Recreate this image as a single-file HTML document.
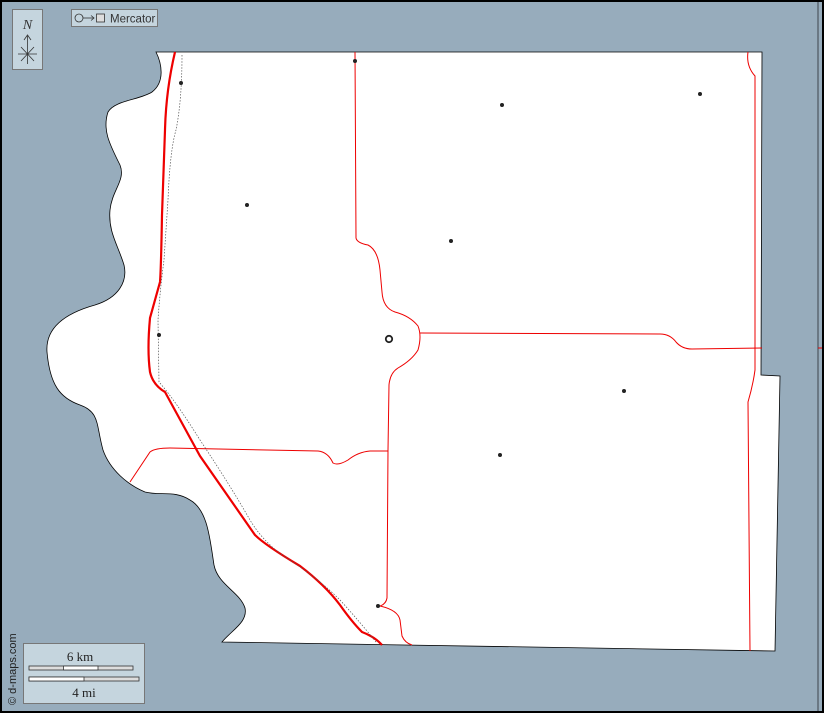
<!DOCTYPE html>
<html><head><style>body{margin:0}svg{display:block}</style></head><body>
<svg width="824" height="713" xmlns="http://www.w3.org/2000/svg">
<rect x="0" y="0" width="824" height="713" fill="#97acbc"/>
<line x1="818" y1="0" x2="818" y2="713" stroke="#000" stroke-width="0.6"/>
<line x1="818" y1="348" x2="824" y2="348" stroke="#e00" stroke-width="1"/>
<path d="M156,52 L762,52 L761,375 L780,376 L775,651 L222,642 C232,630 248,622 245,608 C240,592 218,585 214,565 C210,540 208,510 190,500 C175,490 160,496 145,492 C128,485 110,470 103,450 C96,425 100,412 80,405 C60,398 50,385 47,352 C45,325 70,312 95,305 C118,298 128,282 124,265 C118,245 108,232 110,210 C112,190 126,180 120,165 C110,145 102,130 108,112 C115,100 140,100 152,92 C165,82 162,64 156,52 Z" fill="#fff" stroke="#000" stroke-width="0.8"/>
<g fill="none" stroke="#e00" stroke-width="1">
<path d="M355,52 L356,238 Q357,243 368,245 Q378,250 380,270 L382,292 Q383,308 395,312 Q410,316 418,326 Q422,336 418,350 Q412,360 398,368 Q390,373 389,385 L388,450 L387,598 Q386,604 380,606 Q398,610 400,620 L402,636 Q405,643 412,645"/>
<path d="M420,333 L660,334 Q670,334 676,342 Q682,349 692,349 L762,348"/>
<path d="M130,482 L150,452 Q155,448 170,448 L318,451 Q328,452 333,463 Q338,466 348,460 Q358,452 370,451 L388,451"/>
<path d="M748,52 Q746,66 755,76 L755,370 Q753,385 748,402 L750,651"/>
</g>
<path d="M175,52 Q166,90 165,130 L162,215 Q161,270 160,282 Q155,300 150,318 Q147,350 150,372 Q153,385 165,392 L200,456 L255,535 Q265,545 300,566 Q325,585 340,605 Q352,622 362,632 Q375,637 382,645" fill="none" stroke="#e00" stroke-width="2.2"/>
<path d="M182,55 Q182,100 176,130 Q170,150 168,200 L164,260 Q160,290 158,320 L159,382 Q175,400 200,440 Q230,485 250,520 Q265,545 290,560 Q320,580 340,600 Q360,622 376,642" fill="none" stroke="#555" stroke-width="0.7" stroke-dasharray="1.5,1.5"/>
<g fill="#222">
<circle cx="181" cy="83" r="2"/><circle cx="355" cy="61" r="2"/><circle cx="502" cy="105" r="2"/><circle cx="700" cy="94" r="2"/><circle cx="247" cy="205" r="2"/><circle cx="451" cy="241" r="2"/><circle cx="159" cy="335" r="2"/><circle cx="624" cy="391" r="2"/><circle cx="500" cy="455" r="2"/><circle cx="378" cy="606" r="2"/>
</g>
<circle cx="389" cy="339" r="3.2" fill="none" stroke="#222" stroke-width="1.8"/>
<rect x="1" y="1" width="822" height="711" fill="none" stroke="#000" stroke-width="2"/>
<rect x="12.5" y="9.5" width="30" height="60" fill="#c5d5de" stroke="#777"/>
<text x="27.5" y="29" font-family="Liberation Serif" font-style="italic" font-size="14" text-anchor="middle" fill="#333">N</text>
<g stroke="#333" stroke-width="0.8" fill="none"><line x1="27.5" y1="36" x2="27.5" y2="64"/><path d="M24,40 L27.5,35 L31,40"/><line x1="18" y1="54" x2="37" y2="54"/><line x1="21" y1="47" x2="34" y2="61"/><line x1="34" y1="47" x2="21" y2="61"/></g>
<rect x="71.5" y="9.5" width="86" height="17" fill="#c5d5de" stroke="#777"/>
<circle cx="79" cy="18" r="4" fill="none" stroke="#333" stroke-width="0.8"/>
<g stroke="#333" stroke-width="0.8" fill="none"><line x1="83" y1="18" x2="94" y2="18"/><path d="M91,15.5 L94,18 L91,20.5"/></g>
<rect x="96.5" y="14" width="8" height="8" fill="#ddd" stroke="#333" stroke-width="0.8"/>
<text x="110" y="22.5" font-family="Liberation Sans" font-size="11.5" fill="#333">Mercator</text>
<rect x="23.5" y="643.5" width="121" height="60" fill="#c5d5de" stroke="#777"/>
<text x="80" y="661" font-family="Liberation Serif" font-size="13" text-anchor="middle" fill="#222">6 km</text>
<rect x="29" y="666" width="104" height="4" fill="#ddd" stroke="#333" stroke-width="0.8"/>
<rect x="63.5" y="666" width="34.5" height="4" fill="#fff" stroke="#333" stroke-width="0.8"/>
<rect x="29" y="677" width="110" height="4" fill="#ddd" stroke="#333" stroke-width="0.8"/>
<rect x="29" y="677" width="55" height="4" fill="#fff" stroke="#333" stroke-width="0.8"/>
<text x="84" y="697" font-family="Liberation Serif" font-size="13" text-anchor="middle" fill="#222">4 mi</text>
<text transform="translate(16,705) rotate(-90)" font-family="Liberation Sans" font-size="11" fill="#222">© d-maps.com</text>
</svg>
</body></html>
